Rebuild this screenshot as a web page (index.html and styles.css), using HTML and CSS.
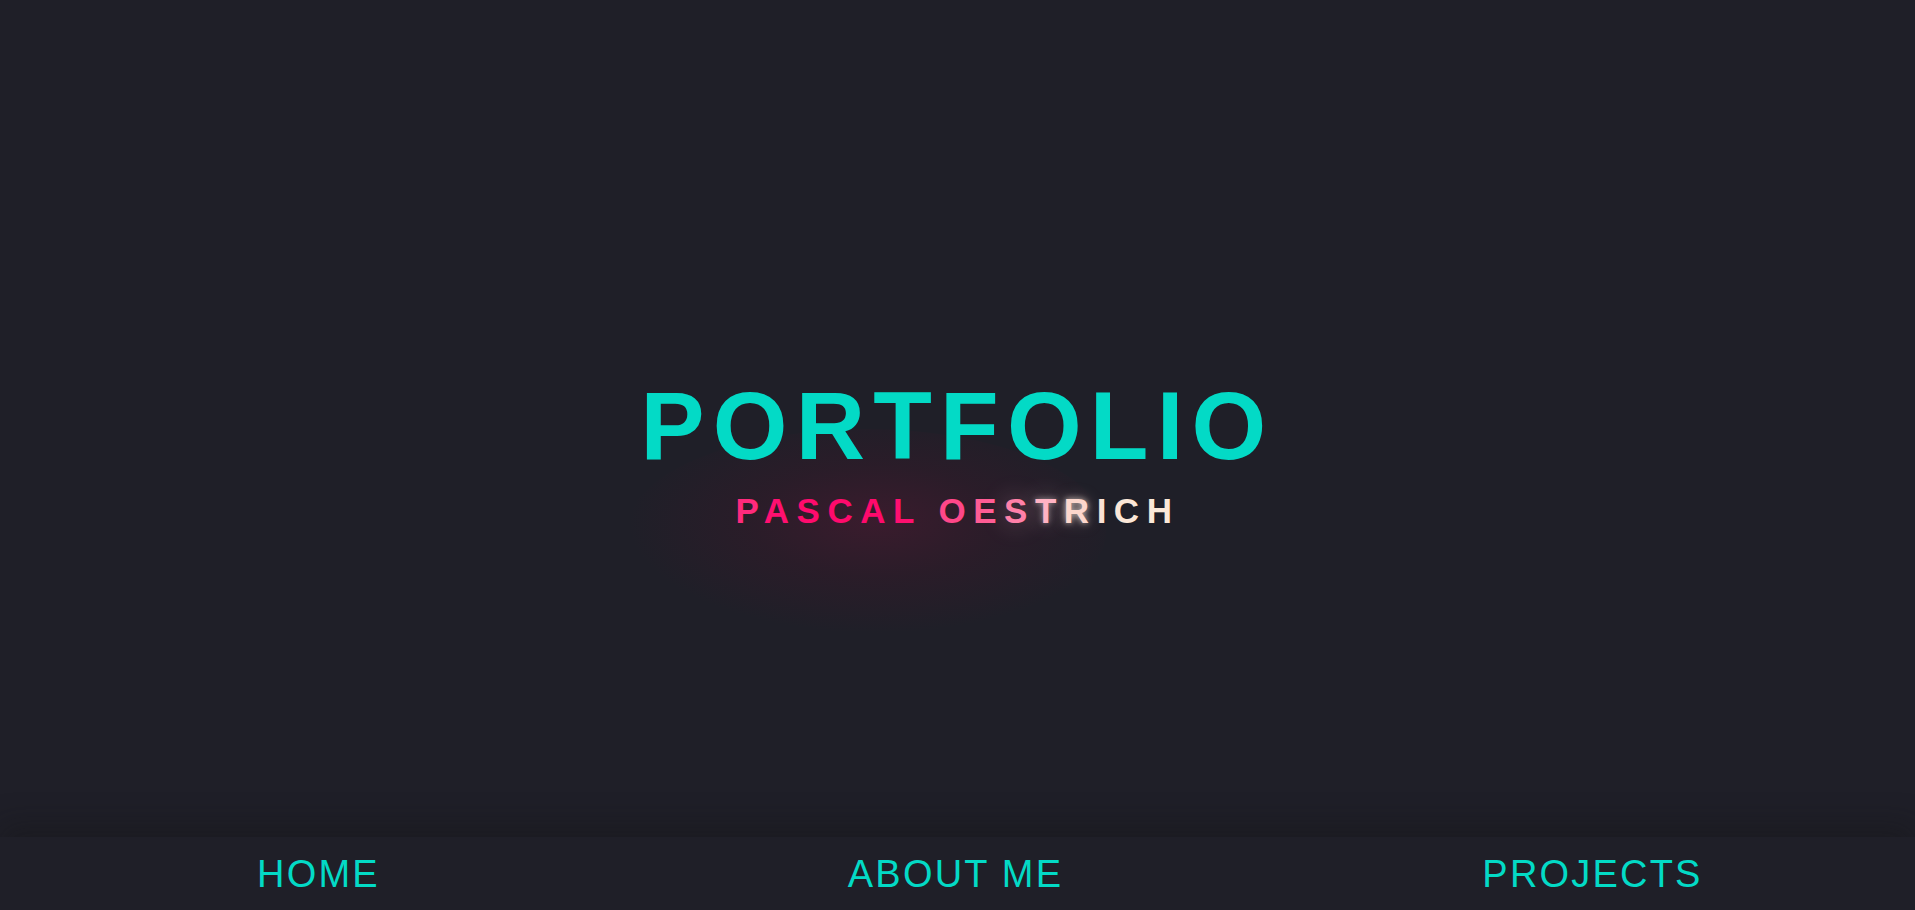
FILE: index.html
```html
<!DOCTYPE html>
<html lang="en">
<head>
<meta charset="utf-8">
<title>Portfolio</title>
<link rel="stylesheet" href="styles.css">
</head>
<body>
<main class="hero">
  <div class="hero-inner">
    <h1 class="title">PORTFOLIO</h1>
    <p class="subtitle"><span class="glow-bg"></span><span class="l1">P</span><span class="l2">A</span><span class="l3">S</span><span class="l4">C</span><span class="l5">A</span><span class="l6">L</span> <span class="l7">O</span><span class="l8">E</span><span class="l9">S</span><span class="l10">T</span><span class="l11">R</span><span class="l12">I</span><span class="l13">C</span><span class="l14">H</span></p>
  </div>
</main>
<nav class="nav">
  <a class="nav-link" href="#">HOME</a>
  <a class="nav-link" href="#">ABOUT ME</a>
  <a class="nav-link" href="#">PROJECTS</a>
</nav>
</body>
</html>
```
FILE: styles.css
```css
* { box-sizing: border-box; }
html, body { margin: 0; padding: 0; }
body {
  background: #1f1f28;
  font-family: "Liberation Sans", Arial, sans-serif;
  height: 100vh;
  display: flex;
  flex-direction: column;
  overflow: hidden;
}
.hero {
  flex: 1;
  display: flex;
  justify-content: center;
  padding-top: 371px;
}
.hero-inner {
  display: flex;
  flex-direction: column;
  align-items: center;
}
.title {
  position: relative;
  z-index: 2;
  margin: 0;
  font-size: 96px;
  font-weight: 700;
  letter-spacing: 8.2px;
  line-height: 110px;
  color: #03dac6;
}
.subtitle {
  position: relative;
  z-index: 1;
  margin: 10px 0 0;
  font-size: 35px;
  font-weight: 700;
  letter-spacing: 7.5px;
  line-height: 40px;
  white-space: nowrap;
}
.subtitle span { position: relative; }
.subtitle .glow-bg {
  position: absolute;
  left: -110px;
  top: -62px;
  width: 480px;
  height: 205px;
  border-radius: 50%;
  background: radial-gradient(ellipse at 52% 45%, rgba(85, 24, 50, 0.5) 0%, rgba(60, 24, 42, 0.38) 35%, rgba(31, 31, 40, 0) 70%);
  z-index: -1;
}
.l1 { color: #ff2a7c; }
.l2 { color: #ff1070; }
.l3 { color: #ff0b6d; }
.l4 { color: #ff0a6c; }
.l5 { color: #ff0a6c; }
.l6 { color: #ff0f6f; }
.l7 { color: #ff4789; }
.l8 { color: #ff5c94; }
.l9 { color: #ff80a8; text-shadow: 0 0 24px rgba(255, 200, 215, 0.4); }
.l10 { color: #ffb3c4; text-shadow: 0 0 6px rgba(255, 240, 240, 0.55), 0 0 24px rgba(255, 210, 220, 0.45); }
.l11 { color: #fcd6cc; text-shadow: 0 0 6px rgba(255, 240, 230, 0.75), 0 0 16px rgba(255, 220, 210, 0.35); }
.l12 { color: #fbe2d6; }
.l13 { color: #fbe7d7; }
.l14 { color: #fbe9d9; }
.nav {
  height: 73px;
  flex: none;
  display: grid;
  grid-template-columns: repeat(3, 1fr);
  align-items: center;
  padding-right: 4px;
  background: #1f1f28;
  box-shadow: 0 -12px 30px rgba(20, 20, 20, 0.35);
  position: relative;
}
.nav-link {
  justify-self: center;
  color: #03dac6;
  text-decoration: none;
  font-size: 38px;
  letter-spacing: 2.2px;
  line-height: 44px;
}
```
